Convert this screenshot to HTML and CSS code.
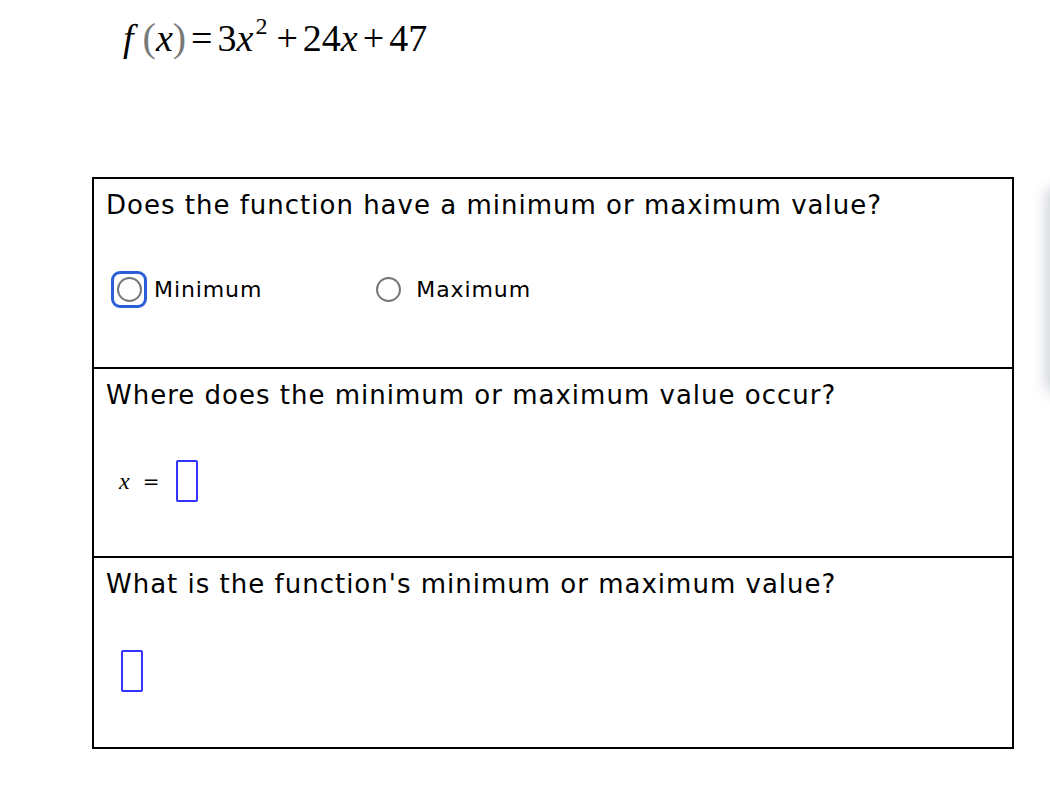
FILE: index.html
```html
<!DOCTYPE html>
<html>
<head>
<meta charset="utf-8">
<link rel="stylesheet" href="styles.css">
</head>
<body>
<div class="page">
  <div class="formula">
    <span class="it f">f</span><span class="paren">(</span><span class="it">x</span><span class="paren">)</span><span class="op">=</span><span>3</span><span class="it">x</span><sup>2</sup><span class="op">+</span><span>24</span><span class="it">x</span><span class="op">+</span><span>47</span>
  </div>
  <div class="table">
    <div class="row">
      <div class="q">Does the function have a minimum or maximum value?</div>
      <div class="radios">
        <label class="radio focused"><span class="ring"><span class="circle"></span></span><span class="lbl">Minimum</span></label>
        <label class="radio"><span class="ring"><span class="circle"></span></span><span class="lbl">Maximum</span></label>
      </div>
    </div>
    <div class="row">
      <div class="q">Where does the minimum or maximum value occur?</div>
      <div class="answer xrow"><span class="var">x</span><span class="eq">=</span><span class="box"></span></div>
    </div>
    <div class="row">
      <div class="q">What is the function's minimum or maximum value?</div>
      <div class="answer valrow"><span class="box"></span></div>
    </div>
  </div>
</div>
<div class="edge-shadow"></div>
</body>
</html>
```

FILE: styles.css
```css
html, body {
  margin: 0;
  padding: 0;
  background: #fff;
}
body {
  width: 1050px;
  height: 788px;
  overflow: hidden;
  position: relative;
  font-family: "DejaVu Sans", Verdana, sans-serif;
  color: #000;
}
.page {
  padding-left: 92px;
}
.formula {
  font-family: "Liberation Serif", "Times New Roman", serif;
  font-size: 38px;
  height: 177px;
  padding-left: 31px;
  padding-top: 17px;
  box-sizing: border-box;
  line-height: 42px;
  white-space: nowrap;
  display: flex;
  align-items: baseline;
}
.formula .it { font-style: italic; }
.formula .f { margin-right: 9px; }
.formula .paren { color: #7a7a7a; font-size: 40px; }
.formula .op { margin: 0 5px; }
.formula sup {
  font-size: 24px;
  line-height: 1;
  position: relative;
  top: -17px;
  margin-left: 2px;
  margin-right: 4px;
}
.table {
  width: 922px;
  box-sizing: border-box;
  border: 2px solid #000;
}
.row {
  height: 189px;
  box-sizing: border-box;
  border-top: 2px solid #000;
  padding: 8px 12px 0 12px;
}
.row:first-child { border-top: none; height: 188px; }
.row:last-child { height: 191px; }
.q {
  font-size: 26px;
  letter-spacing: 1px;
  line-height: 36px;
  white-space: nowrap;
}
.radios {
  display: flex;
  margin-top: 48px;
  margin-left: 5px;
}
.radio {
  display: flex;
  align-items: center;
  font-size: 22px;
  letter-spacing: 0.9px;
}
.radio + .radio { margin-left: 108px; }
.ring {
  width: 36px;
  height: 37px;
  box-sizing: border-box;
  border: 3px solid transparent;
  border-radius: 9px;
  display: flex;
  align-items: center;
  justify-content: center;
}
.focused .ring { border-color: #2a5fd8; border-width: 3.5px; }
.circle {
  width: 25px;
  height: 25px;
  box-sizing: border-box;
  border: 2px solid #767676;
  border-radius: 50%;
  background: #fff;
}
.lbl { margin-left: 7px; }
.radio + .radio .lbl { margin-left: 10px; }
.answer {
  display: flex;
  align-items: center;
}
.xrow {
  margin-top: 47px;
  padding-left: 13px;
}
.var {
  font-family: "Liberation Serif", "Times New Roman", serif;
  font-style: italic;
  font-size: 24px;
}
.eq {
  font-size: 20px;
  margin-left: 13px;
  margin-right: 17px;
}
.box {
  width: 22px;
  height: 42px;
  box-sizing: border-box;
  border: 2px solid #3333ff;
  border-radius: 2px;
}
.valrow {
  margin-top: 48px;
  padding-left: 15px;
}
.edge-shadow {
  position: absolute;
  left: 1050px;
  top: 188px;
  width: 40px;
  height: 204px;
  box-shadow: -4px 0 14px rgba(120, 130, 150, 0.35);
  border-radius: 6px;
  background: #fff;
}
```
